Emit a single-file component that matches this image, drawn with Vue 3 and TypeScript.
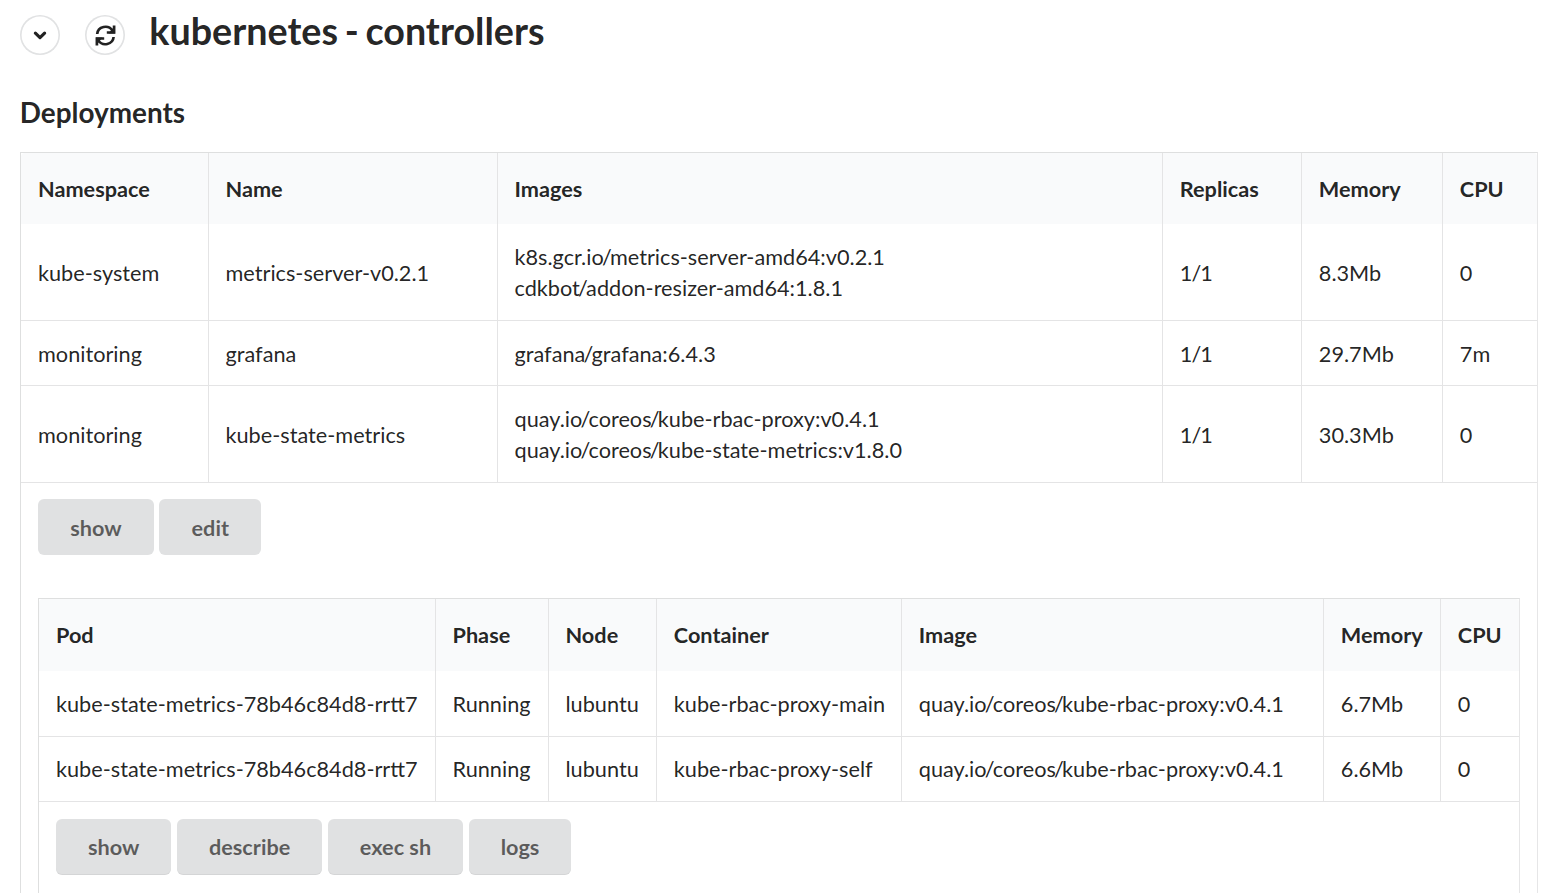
<script setup lang="ts">
interface Deployment {
  namespace: string
  name: string
  images: string[]
  replicas: string
  memory: string
  cpu: string
}

interface PodContainer {
  pod: string
  phase: string
  node: string
  container: string
  image: string
  memory: string
  cpu: string
}

const deployments: Deployment[] = [
  {
    namespace: 'kube-system',
    name: 'metrics-server-v0.2.1',
    images: ['k8s.gcr.io/metrics-server-amd64:v0.2.1', 'cdkbot/addon-resizer-amd64:1.8.1'],
    replicas: '1/1',
    memory: '8.3Mb',
    cpu: '0',
  },
  {
    namespace: 'monitoring',
    name: 'grafana',
    images: ['grafana/grafana:6.4.3'],
    replicas: '1/1',
    memory: '29.7Mb',
    cpu: '7m',
  },
  {
    namespace: 'monitoring',
    name: 'kube-state-metrics',
    images: ['quay.io/coreos/kube-rbac-proxy:v0.4.1', 'quay.io/coreos/kube-state-metrics:v1.8.0'],
    replicas: '1/1',
    memory: '30.3Mb',
    cpu: '0',
  },
]

const containers: PodContainer[] = ['main', 'self'].map((suffix, i) => ({
  pod: 'kube-state-metrics-78b46c84d8-rrtt7',
  phase: 'Running',
  node: 'lubuntu',
  container: `kube-rbac-proxy-${suffix}`,
  image: 'quay.io/coreos/kube-rbac-proxy:v0.4.1',
  memory: i === 0 ? '6.7Mb' : '6.6Mb',
  cpu: '0',
}))

const deploymentColumns = ['Namespace', 'Name', 'Images', 'Replicas', 'Memory', 'CPU']
const podColumns = ['Pod', 'Phase', 'Node', 'Container', 'Image', 'Memory', 'CPU']
const deploymentActions = ['show', 'edit']
const podActions = ['show', 'describe', 'exec sh', 'logs']

// Splits a path so that its slashes can be set tighter than the words.
const parts = (path: string): string[] => path.split(/(\/)/)
</script>

<template>
  <main class="page">
    <header class="header">
      <button class="circle" aria-label="Expand">
        <svg viewBox="0 0 40 40" width="40" height="40">
          <path d="M15.4 18.2 20 22.6 24.6 18.2" class="stroke chevron" />
        </svg>
      </button>
      <button class="circle" aria-label="Refresh">
        <svg viewBox="0 0 40 40" width="40" height="40">
          <path class="stroke" d="M12.2 19A8.2 7.8 0 0 1 27.4 15.6M29.1 10.4V17.5H21.8" />
          <path class="stroke" d="M28.6 22A8.2 7.8 0 0 1 13.4 25.4M11.9 30.6V23.5H19.2" />
          <path class="solid" d="M30 11V18.6H23.4ZM11 30V22.4H17.6Z" />
        </svg>
      </button>
      <h1 class="title">kubernetes - controllers</h1>
    </header>

    <h2 class="section">Deployments</h2>

    <table class="table outer">
      <colgroup>
        <col v-for="c in deploymentColumns" :key="c" :class="'d-' + c.toLowerCase()" />
      </colgroup>
      <thead>
        <tr>
          <th v-for="c in deploymentColumns" :key="c">{{ c }}</th>
        </tr>
      </thead>
      <tbody>
        <tr v-for="d in deployments" :key="d.name" :class="d.images.length > 1 ? 'double' : 'single'">
          <td>{{ d.namespace }}</td>
          <td>{{ d.name }}</td>
          <td>
            <div v-for="image in d.images" :key="image"><span v-for="(s, i) in parts(image)" :key="i" :class="{ slash: s === '/' }">{{ s }}</span></div>
          </td>
          <td><span v-for="(s, i) in parts(d.replicas)" :key="i" :class="{ 'slash-digit': s === '/' }">{{ s }}</span></td>
          <td>{{ d.memory }}</td>
          <td>{{ d.cpu }}</td>
        </tr>
        <tr>
          <td colspan="6" class="detail">
            <div class="actions">
              <button v-for="a in deploymentActions" :key="a" class="button">{{ a }}</button>
            </div>
            <table class="table inner">
              <colgroup>
                <col v-for="c in podColumns" :key="c" :class="'p-' + c.toLowerCase()" />
              </colgroup>
              <thead>
                <tr>
                  <th v-for="c in podColumns" :key="c">{{ c }}</th>
                </tr>
              </thead>
              <tbody>
                <tr v-for="p in containers" :key="p.container" class="single">
                  <td>{{ p.pod }}</td>
                  <td>{{ p.phase }}</td>
                  <td>{{ p.node }}</td>
                  <td>{{ p.container }}</td>
                  <td><span v-for="(s, i) in parts(p.image)" :key="i" :class="{ slash: s === '/' }">{{ s }}</span></td>
                  <td>{{ p.memory }}</td>
                  <td>{{ p.cpu }}</td>
                </tr>
                <tr>
                  <td colspan="7" class="detail">
                    <div class="actions">
                      <button v-for="a in podActions" :key="a" class="button">{{ a }}</button>
                    </div>
                  </td>
                </tr>
              </tbody>
            </table>
          </td>
        </tr>
      </tbody>
    </table>
  </main>
</template>

<style>
body {
  margin: 0;
  background: #fff;
  overflow: hidden;
}
</style>

<style scoped>
.page {
  box-sizing: border-box;
  height: 893px;
  overflow: hidden;
  padding: 0 17px 0 20px;
  font-family: Lato, 'Liberation Sans', sans-serif;
  font-size: 21.7px;
  line-height: 31px;
  color: rgba(0, 0, 0, 0.87);
}

.header {
  display: flex;
  align-items: flex-start;
  height: 94px;
}

.circle {
  box-sizing: border-box;
  width: 40px;
  height: 40px;
  margin: 15px 25px 0 0;
  padding: 0;
  border: 0;
  border-radius: 50%;
  background: #fff;
  box-shadow: inset 0 0 0 1.6px #e1e2e3;
}

.circle svg {
  display: block;
}

.stroke {
  fill: none;
  stroke: #222;
  stroke-width: 2.7;
}

.solid {
  fill: #222;
}

.chevron {
  stroke-width: 3.2;
  stroke-linecap: round;
  stroke-linejoin: round;
}

.title {
  margin: 7px 0 0 -0.7px;
  font-size: 37.7px;
  line-height: 48px;
  font-weight: 700;
  word-spacing: -2.5px;
}

.section {
  margin: 0 0 0 -0.3px;
  height: 58px;
  font-size: 27.9px;
  line-height: 36px;
  font-weight: 700;
}

.table {
  box-sizing: border-box;
  table-layout: fixed;
  border: 1px solid #dedfdf;
  border-right-color: #e6e6e7;
  border-bottom: 0;
  border-spacing: 0;
  background: #fff;
}

.outer {
  width: 1518px;
}

.inner {
  width: 1482px;
  margin-top: 43px;
}

th,
td {
  box-sizing: border-box;
  padding: 0 0 0 16.5px;
  text-align: left;
  vertical-align: middle;
  white-space: nowrap;
  border-left: 1px solid #e4e4e5;
}

th:nth-child(n + 4),
td:nth-child(n + 4) {
  padding-left: 16.8px;
}

th:first-child,
td:first-child {
  padding-left: 17px;
  border-left: 0;
}

th {
  height: 71px;
  padding-top: 2px;
  background: #f9fafb;
  font-weight: 700;
}

th:first-child {
  border-top-left-radius: 4px;
}

th:last-child {
  border-top-right-radius: 4px;
}

.inner > thead th {
  height: 72px;
  padding-top: 0;
}

.single > td {
  height: 65px;
  padding-top: 2px;
}

.inner .single + .single > td {
  padding-top: 0;
}

.double > td {
  height: 97px;
  padding-top: 2px;
}

tbody tr:first-child.double > td {
  height: 96px;
}

tbody tr + tr > td {
  border-top: 1px solid #e4e4e5;
}

td.detail {
  height: 460px;
  padding-top: 16px;
  vertical-align: top;
}

.inner td.detail {
  height: 200px;
  padding-top: 17px;
}

.slash {
  margin: 0 -1.8px;
}

.slash-digit {
  margin: 0 -1px;
}

.actions {
  display: flex;
  gap: 5.5px;
}

.button {
  height: 56px;
  padding: 4px 32.2px 2px;
  border: 0;
  border-radius: 6px;
  background: #e0e1e2;
  color: rgba(0, 0, 0, 0.6);
  font: 700 21.7px/31px Lato, 'Liberation Sans', sans-serif;
  white-space: nowrap;
}

.inner .button {
  padding: 2px 32px;
  box-shadow: inset 0 -1px 0 rgba(0, 0, 0, 0.05);
}

.d-namespace { width: 187px; }
.d-name { width: 289px; }
.d-images { width: 665px; }
.d-replicas { width: 139px; }
.d-memory { width: 141px; }
.d-cpu { width: 95px; }

.p-pod { width: 396px; }
.p-phase { width: 113px; }
.p-node { width: 108px; }
.p-container { width: 245px; }
.p-image { width: 422px; }
.p-memory { width: 117px; }
.p-cpu { width: 79px; }
</style>
